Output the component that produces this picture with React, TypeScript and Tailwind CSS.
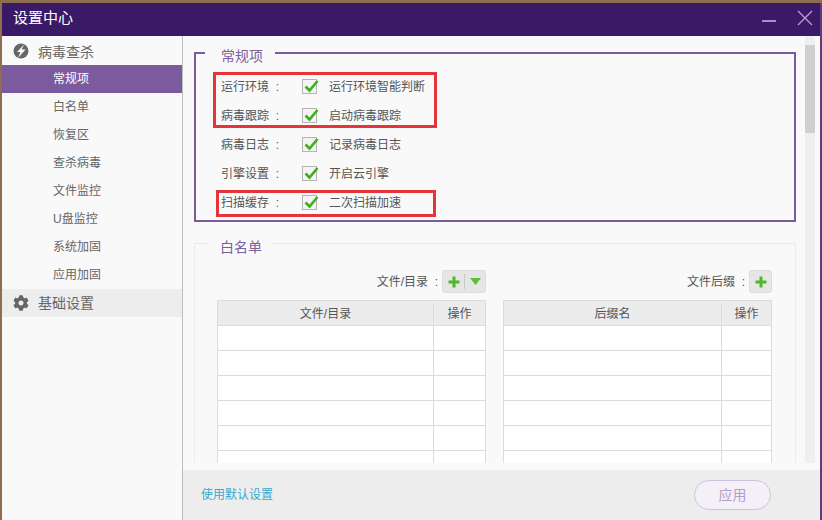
import { FaCog } from "react-icons/fa";

const cjk = "font-['Liberation_Sans','Noto_Sans_CJK_SC',sans-serif]";

const subItems = ["常规项", "白名单", "恢复区", "查杀病毒", "文件监控", "U盘监控", "系统加固", "应用加固"];

const options = [
  { label: "运行环境  :", text: "运行环境智能判断" },
  { label: "病毒跟踪  :", text: "启动病毒跟踪" },
  { label: "病毒日志  :", text: "记录病毒日志" },
  { label: "引擎设置  :", text: "开启云引擎" },
  { label: "扫描缓存  :", text: "二次扫描加速" },
];

const CheckBox = () => (
  <span className="relative block h-[15px] w-[15px] border border-[#b4b4b4] bg-[#f4f4f4]">
    <svg className="absolute -top-[1px] left-[1px]" width="15" height="14" viewBox="0 0 15 14">
      <path d="M1.5 7.5 L5.5 11.5 L13.5 2" fill="none" stroke="#3fae1e" strokeWidth="2.6" />
    </svg>
  </span>
);

const Plus = () => (
  <svg width="12" height="12" viewBox="0 0 12 12">
    <path d="M4.5 0.5h3v4h4v3h-4v4h-3v-4h-4v-3h4z" fill="#4cb82b" />
  </svg>
);

const AddButton = ({ withMenu }: { withMenu?: boolean }) => (
  <div className="flex h-[23px] items-center rounded-[3px] border border-[#dcdcdc] bg-[#e6e6e6]">
    <span className="flex w-[21px] justify-center"><Plus /></span>
    {withMenu && (
      <>
        <span className="h-[15px] w-px bg-[#c9c9c9]" />
        <span className="flex w-[20px] justify-center">
          <svg width="11" height="7" viewBox="0 0 11 7">
            <path d="M0 0h11L5.5 7z" fill="#5cbf3c" />
          </svg>
        </span>
      </>
    )}
  </div>
);

const FileTable = ({ title, nameWidth }: { title: string; nameWidth: string }) => (
  <div className="w-full border-l border-r border-[#dcdcdc] bg-white text-[12px] text-[#555]">
    <div className="flex h-[26px] items-center border-t border-b border-[#dcdcdc] bg-[#ececec] pt-[2px]">
      <div className={`${nameWidth} text-center`}>{title}</div>
      <div className="flex h-full flex-1 items-center justify-center border-l border-[#dcdcdc]">操作</div>
    </div>
    {[0, 1, 2, 3, 4, 5].map((i) => (
      <div key={i} className="flex h-[25px] border-b border-[#dcdcdc]">
        <div className={nameWidth} />
        <div className="flex-1 border-l border-[#dcdcdc]" />
      </div>
    ))}
  </div>
);

const App = () => {
  return (
    <div className={`${cjk} h-[520px] w-[822px] overflow-hidden bg-[#8d6f4f] pl-[2px] pt-[3px]`}>
      <div className="flex h-[517px] flex-col border-r-2 border-[#5a3d80]">
        <header className="flex h-[33px] shrink-0 items-center justify-between bg-[#3a1a66] pb-[3px] pl-[11px] pr-[7px] text-[15px] text-white">
          <span>设置中心</span>
          <div className="flex items-center gap-[21px]">
            <span className="mt-[6px] h-[2px] w-[14px] bg-[#a98cc8]" />
            <svg width="16" height="16" viewBox="0 0 16 16">
              <path d="M1 1 L15 15 M15 1 L1 15" stroke="#b79bd4" strokeWidth="1.4" />
            </svg>
          </div>
        </header>

        <div className="flex min-h-0 flex-1">
          <aside className="w-[181px] shrink-0 border-r border-[#bdbdbd] bg-[#f9f9f9] text-[#666]">
            <div className="flex h-[29px] items-center pl-[11px] text-[14px]">
              <svg width="16" height="16" viewBox="0 0 16 16" className="mr-[9px]">
                <circle cx="8" cy="8" r="7.5" fill="#666" />
                <path d="M11.5 1 L4 9 H7.5 L5 15 L12.5 6.5 H8.5 Z" fill="#f9f9f9" />
              </svg>
              <span className="pt-[3px]">病毒查杀</span>
            </div>
            {subItems.map((item, i) => (
              <div
                key={item}
                className={`flex h-[28px] items-center pl-[51px] text-[12px] ${i === 0 ? "bg-[#7b5a9e] text-white" : ""}`}
              >
                {item}
              </div>
            ))}
            <div className="flex h-[28px] items-center bg-[#ededed] pl-[11px] text-[14px]">
              <FaCog size={16} className="mr-[9px] text-[#666]" />
              <span className="pt-[1px]">基础设置</span>
            </div>
          </aside>

          <main className="flex min-w-0 flex-1 flex-col bg-[#f9f9f9]">
            <div className="relative flex min-h-0 flex-1 overflow-hidden">
              <div className="w-[613px] shrink-0 pl-[11px] pt-[10px]">
                <fieldset className="relative h-[176px] w-[602px] border-2 border-[#7b5a9e] pl-[25px]">
                  <legend className="relative top-[3px] -ml-[16px] pl-[16px] pr-[12px] text-[14px] leading-[14px] text-[#7a5f9a]">
                    常规项
                  </legend>
                  <div className="mt-[12px] flex flex-col">
                    {options.map((o) => (
                      <div key={o.label} className="flex h-[29px] items-center text-[12px] text-[#555]">
                        <span className="w-[81px] whitespace-pre">{o.label}</span>
                        <CheckBox />
                        <span className="ml-[12px]">{o.text}</span>
                      </div>
                    ))}
                  </div>
                  <span className="absolute left-[17px] top-[12px] h-[56px] w-[224px] border-[3px] border-[#e5343a]" />
                  <span className="absolute left-[20px] top-[130px] h-[27px] w-[220px] border-[3px] border-[#e5343a]" />
                </fieldset>

                <fieldset className="mt-[14px] h-[300px] w-[602px] border border-[#ececec] pl-[22px] pr-[23px]">
                  <legend className="relative top-[4px] -ml-[8px] pl-[11px] pr-[9px] text-[14px] leading-[14px] text-[#7a5f9a]">
                    白名单
                  </legend>
                  <div className="mt-[20px] grid grid-cols-[269px_269px] gap-x-[17px]">
                    <div>
                      <div className="flex h-[23px] items-center justify-end gap-[4px] whitespace-pre text-[12px] text-[#555]">
                        <span>文件/目录  :</span>
                        <AddButton withMenu />
                      </div>
                      <div className="mt-[7px]"><FileTable title="文件/目录" nameWidth="w-[215px]" /></div>
                    </div>
                    <div>
                      <div className="flex h-[23px] items-center justify-end gap-[4px] whitespace-pre text-[12px] text-[#555]">
                        <span>文件后缀  :</span>
                        <AddButton />
                      </div>
                      <div className="mt-[7px]"><FileTable title="后缀名" nameWidth="w-[217px]" /></div>
                    </div>
                  </div>
                </fieldset>
              </div>
              <div className="ml-[9px] flex w-[10px] shrink-0 flex-col bg-[#efefef] pt-[9px]">
                <div className="h-[88px] bg-[#cfcfcf]" />
              </div>
            </div>
            <footer className="mt-[7px] flex h-[50px] shrink-0 items-center justify-between bg-[#ededed] pl-[18px] pr-[49px]">
              <span className="text-[12px] text-[#39a9cf]">使用默认设置</span>
              <button className="h-[30px] w-[77px] rounded-[15px] border border-[#cdc3dc] bg-[#f3f0f7] text-[14px] text-[#b49fca]">
                应用
              </button>
            </footer>
          </main>
        </div>
      </div>
    </div>
  );
};

export default App;
